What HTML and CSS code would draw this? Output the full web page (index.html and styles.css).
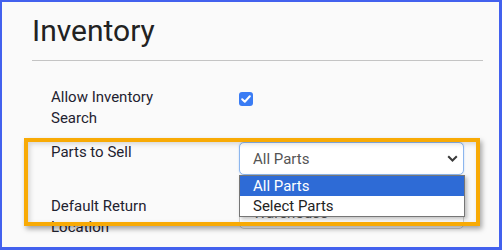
FILE: index.html
```html
<!DOCTYPE html>
<html lang="en">
  <head>
    <meta charset="UTF-8" />
    <meta name="viewport" content="width=device-width, initial-scale=1.0" />
    <title>Inventory Settings</title>
    <link rel="stylesheet" href="styles.css">
  </head>
  <body>
    <div class="frame">
      <h1 class="title">Inventory</h1>
      <hr class="divider" />

      <div class="form">
        <div class="row row-check">
          <label class="label">Allow Inventory Search</label>
          <div class="control">
            <span class="checkbox">
              <svg width="10" height="8" viewBox="0 0 10 8">
                <path d="M1.2 4.2l2.6 2.5L8.8 1.3" fill="none" stroke="#fff" stroke-width="2" stroke-linecap="round" stroke-linejoin="round" />
              </svg>
            </span>
          </div>
        </div>

        <div class="row">
          <label class="label">Parts to Sell</label>
          <div class="control">
            <div class="select select-focus">
              <span>All Parts</span>
              <svg class="chevron" width="11" height="7" viewBox="0 0 11 7">
                <path d="M1.2 1.2l4.3 4.3 4.3-4.3" fill="none" stroke="#3a3a3a" stroke-width="2" />
              </svg>
            </div>
            <ul class="listbox">
              <li class="option option-active">All Parts</li>
              <li class="option">Select Parts</li>
            </ul>
          </div>
        </div>

        <div class="row">
          <label class="label">Default Return Location</label>
          <div class="control">
            <div class="select">
              <span>Warehouse</span>
              <svg class="chevron" width="11" height="7" viewBox="0 0 11 7">
                <path d="M1.2 1.2l4.3 4.3 4.3-4.3" fill="none" stroke="#3a3a3a" stroke-width="2" />
              </svg>
            </div>
          </div>
        </div>
      </div>

      <div class="callout"></div>
    </div>
  </body>
</html>
```

FILE: styles.css
```css
body {
  margin: 0;
  font-family: Roboto, "Liberation Sans", sans-serif;
}

.frame {
  position: relative;
  box-sizing: border-box;
  width: 502px;
  height: 250px;
  overflow: hidden;
  background: #fafafa;
  border: solid #4361ee;
  border-width: 2px 3px 3px 2px;
  padding: 11px 16px 0 30px;
}

.title {
  margin: 0;
  font-size: 30px;
  font-weight: 400;
  line-height: 36px;
  color: #222;
}

.divider {
  margin: 11px 0 0;
  height: 0;
  border: 0;
  border-top: 1px solid #c4c4c4;
}

.form {
  padding: 26px 0 0 19px;
}

.row {
  display: grid;
  grid-template-columns: 188px 225px;
  min-height: 54px;
}

.row-check {
  min-height: 55px;
}

.label {
  max-width: 130px;
  font-size: 15px;
  line-height: 21px;
  color: #1f2230;
}

.control {
  position: relative;
  align-self: start;
}

.checkbox {
  display: flex;
  align-items: center;
  justify-content: center;
  width: 14px;
  height: 14px;
  margin-top: 5px;
  border-radius: 3px;
  background: #3a7cf4;
}

.select {
  box-sizing: border-box;
  display: flex;
  align-items: center;
  justify-content: space-between;
  height: 33px;
  padding: 0 5px 0 13px;
  background: #fff;
  border: 1px solid #cfcfcf;
  border-radius: 5px;
  font-size: 15px;
  color: #555;
}

.select-focus {
  border-color: #8cb6ee;
  box-shadow: 0 0 2px rgba(80, 140, 230, 0.35);
}

.listbox {
  position: absolute;
  top: 100%;
  left: 0;
  z-index: 5;
  box-sizing: border-box;
  width: 226px;
  margin: 0;
  padding: 0;
  list-style: none;
  background: #fff;
  border: 1px solid #767676;
  box-shadow: 2px 2px 4px rgba(0, 0, 0, 0.25);
}

.option {
  height: 20px;
  padding-left: 13px;
  font-size: 15px;
  line-height: 20px;
  color: #222;
}

.option-active {
  background: #2e6bd6;
  color: #fff;
}

.callout {
  position: absolute;
  top: 136px;
  left: 22px;
  z-index: 10;
  box-sizing: border-box;
  width: 456px;
  height: 88px;
  border: 4px solid #f8aa05;
  box-shadow: 2px 3px 5px rgba(0, 0, 0, 0.35), inset 2px 2px 5px rgba(0, 0, 0, 0.15);
  pointer-events: none;
}
```
